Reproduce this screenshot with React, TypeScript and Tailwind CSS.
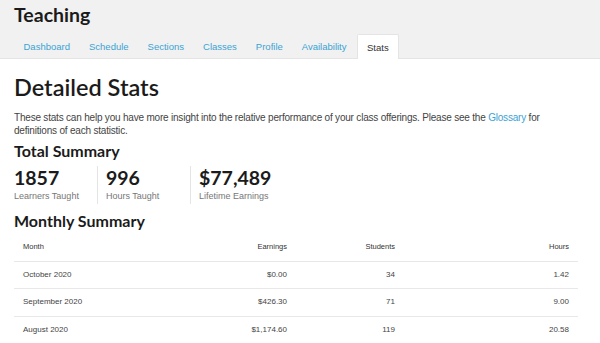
const tabs = ["Dashboard", "Schedule", "Sections", "Classes", "Profile", "Availability", "Stats"];

const totals = [
  { value: "1857", label: "Learners Taught", w: "w-[83px]" },
  { value: "996", label: "Hours Taught", w: "w-[93px]" },
  { value: "$77,489", label: "Lifetime Earnings", w: "" },
];

const rows = [
  { month: "October 2020", earnings: "$0.00", students: "34", hours: "1.42" },
  { month: "September 2020", earnings: "$426.30", students: "71", hours: "9.00" },
  { month: "August 2020", earnings: "$1,174.60", students: "119", hours: "20.58" },
];

const heading = "font-['Lato',sans-serif] font-bold text-[#1b1b1b]";

export default function App() {
  return (
    <div className="h-[343px] overflow-hidden bg-white font-['Liberation_Sans',Arial,sans-serif] text-[#444]">
      <div className="border-b border-[#e4e4e4] bg-[#f1f1f1] px-[14px]">
        <h1 className={`${heading} pt-[2px] text-[19.5px] leading-[26px]`}>Teaching</h1>
        <nav className="mt-[6px] flex">
          {tabs.map((t) => (
            <div
              key={t}
              className={
                t === "Stats"
                  ? "mb-[-1px] ml-[1px] h-[25px] rounded-t-[2px] border border-b-0 border-[#e4e4e4] bg-white px-[9px] pt-[6px] text-[9.5px] text-[#333]"
                  : "h-[24px] px-[9.5px] pt-[6px] text-[9.5px] text-[#3aa3d4]"
              }
            >
              {t}
            </div>
          ))}
        </nav>
      </div>

      <div className="px-[14px]">
        <h2 className={`${heading} mt-[14px] text-[23.5px] leading-[28px] font-semibold`}>Detailed Stats</h2>
        <p className="mt-[10px] text-[10px] leading-[13px] tracking-[-0.2px]">
          <span className="whitespace-nowrap">
            These stats can help you have more insight into the relative performance of your class offerings. Please
            see the <span className="text-[#3aa3d4]">Glossary</span> for
          </span>
          <br />
          definitions of each statistic.
        </p>

        <h3 className={`${heading} mt-[4px] text-[16px] leading-[20px]`}>Total Summary</h3>
        <div className="mt-[5px] flex">
          {totals.map((s, i) => (
            <div key={s.label} className={`${s.w} ${i > 0 ? "border-l border-[#e4e4e4] pl-[8px]" : ""} pb-[2px]`}>
              <div className={`${heading} text-[19.5px] leading-[24px]`}>{s.value}</div>
              <div className="mt-[1px] text-[9px] leading-[11px] text-[#777]">{s.label}</div>
            </div>
          ))}
        </div>

        <h3 className={`${heading} mt-[7px] text-[16px] leading-[20px]`}>Monthly Summary</h3>
        <table className="mt-[1px] w-[564px] text-[8px] text-[#444]">
          <thead>
            <tr className="h-[29px] border-b border-[#e8e8e8] text-[7.5px] text-[#333]">
              <th className="pl-[9px] text-left font-normal">Month</th>
              <th className="w-[150px] text-right font-normal">Earnings</th>
              <th className="w-[108px] text-right font-normal">Students</th>
              <th className="w-[183px] pr-[9px] text-right font-normal">Hours</th>
            </tr>
          </thead>
          <tbody>
            {rows.map((r, i) => (
              <tr key={r.month} className={`h-[27.5px] ${i < rows.length - 1 ? "border-b border-[#e8e8e8]" : ""}`}>
                <td className="pl-[9px]">{r.month}</td>
                <td className="text-right">{r.earnings}</td>
                <td className="text-right">{r.students}</td>
                <td className="pr-[9px] text-right">{r.hours}</td>
              </tr>
            ))}
          </tbody>
        </table>
      </div>
    </div>
  );
}
